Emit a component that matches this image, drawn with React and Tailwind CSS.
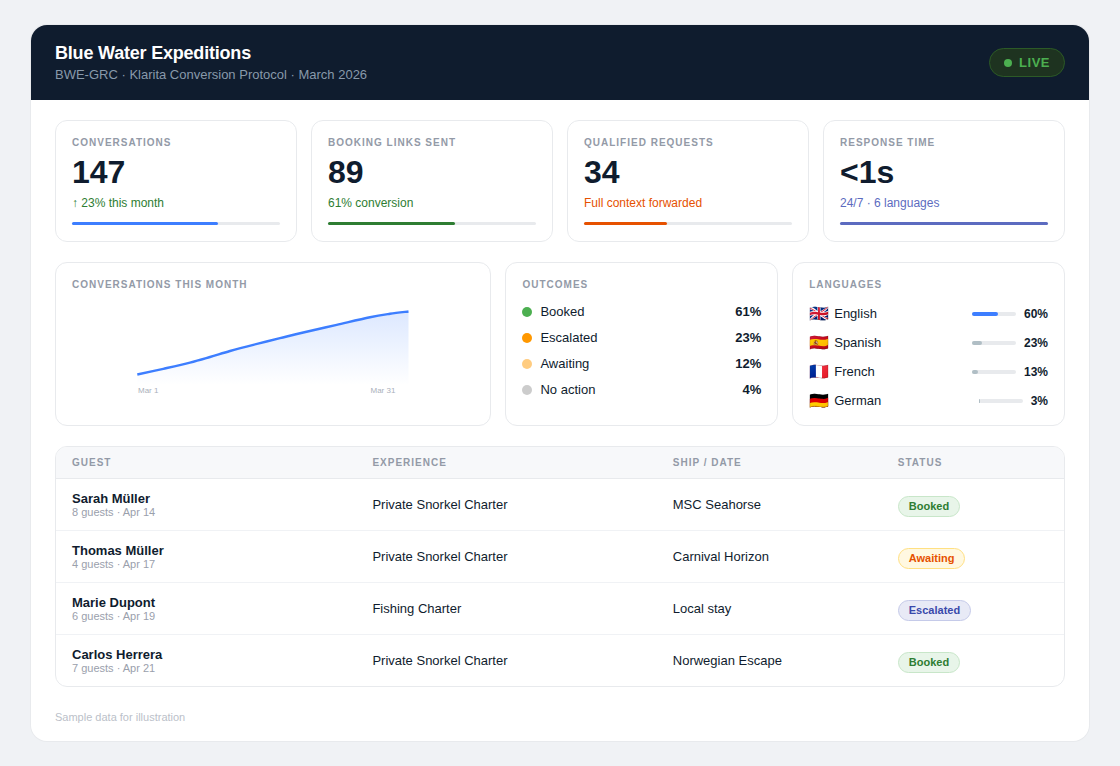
const stats = [
  { label: "CONVERSATIONS", value: "147", note: "↑ 23% this month", noteColor: "text-[#2e7d32]", bar: "bg-[#3d7eff]", pct: "w-[70%]" },
  { label: "BOOKING LINKS SENT", value: "89", note: "61% conversion", noteColor: "text-[#2e7d32]", bar: "bg-[#2e7d32]", pct: "w-[61%]" },
  { label: "QUALIFIED REQUESTS", value: "34", note: "Full context forwarded", noteColor: "text-[#e65100]", bar: "bg-[#e65100]", pct: "w-[40%]" },
  { label: "RESPONSE TIME", value: "<1s", note: "24/7 · 6 languages", noteColor: "text-[#5c6bc0]", bar: "bg-[#5c6bc0]", pct: "w-full" },
];

const outcomes = [
  { name: "Booked", pct: "61%", dot: "bg-[#4caf50]" },
  { name: "Escalated", pct: "23%", dot: "bg-[#ff9800]" },
  { name: "Awaiting", pct: "12%", dot: "bg-[#ffcc80]" },
  { name: "No action", pct: "4%", dot: "bg-[#cccccc]" },
];

const languages = [
  { flag: "🇬🇧", name: "English", pct: "60%", bar: "bg-[#3d7eff]", width: "w-[60%]" },
  { flag: "🇪🇸", name: "Spanish", pct: "23%", bar: "bg-[#b0bec5]", width: "w-[23%]" },
  { flag: "🇫🇷", name: "French", pct: "13%", bar: "bg-[#b0bec5]", width: "w-[13%]" },
  { flag: "🇩🇪", name: "German", pct: "3%", bar: "bg-[#b0bec5]", width: "w-[3%]" },
];

const guests = [
  { name: "Sarah Müller", sub: "8 guests · Apr 14", experience: "Private Snorkel Charter", ship: "MSC Seahorse", status: "Booked" },
  { name: "Thomas Müller", sub: "4 guests · Apr 17", experience: "Private Snorkel Charter", ship: "Carnival Horizon", status: "Awaiting" },
  { name: "Marie Dupont", sub: "6 guests · Apr 19", experience: "Fishing Charter", ship: "Local stay", status: "Escalated" },
  { name: "Carlos Herrera", sub: "7 guests · Apr 21", experience: "Private Snorkel Charter", ship: "Norwegian Escape", status: "Booked" },
];

const badgeStyles = {
  Booked: "bg-[#e8f5e9] border-[#c8e6c9] text-[#2e7d32]",
  Awaiting: "bg-[#fff8e1] border-[#ffe082] text-[#e65100]",
  Escalated: "bg-[#e8eaf6] border-[#c5cae9] text-[#3949ab]",
};

// read off the reference, smoothed below
const chartPoints = [
  [1.3, 64.5], [27.3, 58.8], [54, 52.6], [74, 47], [94, 41], [117.3, 34.8],
  [144, 28.2], [167.3, 22.5], [200.7, 14.8], [234, 7.2], [254, 3.8], [272.5, 1.5],
];

function smoothPath(points) {
  let d = `M${points[0][0]} ${points[0][1]}`;
  for (let i = 0; i < points.length - 1; i++) {
    const p0 = points[i - 1] || points[i];
    const p1 = points[i];
    const p2 = points[i + 1];
    const p3 = points[i + 2] || p2;
    const c1x = p1[0] + (p2[0] - p0[0]) / 6;
    const c1y = p1[1] + (p2[1] - p0[1]) / 6;
    const c2x = p2[0] - (p3[0] - p1[0]) / 6;
    const c2y = p2[1] - (p3[1] - p1[1]) / 6;
    d += ` C${c1x} ${c1y} ${c2x} ${c2y} ${p2[0]} ${p2[1]}`;
  }
  return d;
}

const linePath = smoothPath(chartPoints);

function CardLabel({ children }) {
  return <div className="text-[10px] leading-[12px] font-bold tracking-[1px] text-[#939aa7]">{children}</div>;
}

function StatCard({ label, value, note, noteColor, bar, pct }) {
  return (
    <div className="h-[122px] rounded-xl border border-[#e8eaed] bg-white px-4 pt-4">
      <CardLabel>{label}</CardLabel>
      <div className="mt-px text-[32px] leading-[44px] font-bold text-[#0f1c2e]">{value}</div>
      <div className={`mt-[2px] text-xs leading-[14px] ${noteColor}`}>{note}</div>
      <div className="mt-3 h-[3px] rounded-sm bg-[#e8eaed]">
        <div className={`h-full rounded-sm ${bar} ${pct}`} />
      </div>
    </div>
  );
}

function ChartCard() {
  return (
    <div className="rounded-xl border border-[#e8eaed] bg-white px-4 pt-4">
      <CardLabel>CONVERSATIONS THIS MONTH</CardLabel>
      <svg className="mx-auto mt-[19px] block" width="274" height="90" viewBox="0 0 274 90">
        <defs>
          <linearGradient id="chartFill" x1="0" y1="0" x2="0" y2="1">
            <stop offset="0%" stopColor="#3d7eff" stopOpacity="0.18" />
            <stop offset="100%" stopColor="#3d7eff" stopOpacity="0" />
          </linearGradient>
        </defs>
        <path d={`${linePath} L272.5 75 L1.3 75 Z`} fill="url(#chartFill)" />
        <path d={linePath} fill="none" stroke="#3d7eff" strokeWidth="2.4" />
        <text x="2" y="83" fontSize="8" fill="#aab0bb">Mar 1</text>
        <text x="234.5" y="83" fontSize="8" fill="#aab0bb">Mar 31</text>
      </svg>
    </div>
  );
}

function OutcomesCard() {
  return (
    <div className="rounded-xl border border-[#e8eaed] bg-white px-4 pt-4">
      <CardLabel>OUTCOMES</CardLabel>
      <div className="mt-[8px]">
        {outcomes.map((o) => (
          <div key={o.name} className="flex h-[26px] items-center text-[13px] text-[#0f1c2e]">
            <span className={`h-[10px] w-[10px] rounded-full ${o.dot}`} />
            <span className="ml-2">{o.name}</span>
            <span className="ml-auto font-bold">{o.pct}</span>
          </div>
        ))}
      </div>
    </div>
  );
}

function LanguagesCard() {
  return (
    <div className="rounded-xl border border-[#e8eaed] bg-white px-4 pt-4">
      <CardLabel>LANGUAGES</CardLabel>
      <div className="mt-[8px]">
        {languages.map((l) => (
          <div key={l.name} className="flex h-[29px] items-center text-[13px] text-[#0f1c2e]">
            <span className="w-[25px] text-base leading-none">{l.flag}</span>
            <span>{l.name}</span>
            <div className="ml-auto h-1 w-11 rounded-sm bg-[#e8eaed]">
              <div className={`h-full rounded-sm ${l.bar} ${l.width}`} />
            </div>
            <span className="ml-2 text-xs font-bold">{l.pct}</span>
          </div>
        ))}
      </div>
    </div>
  );
}

function GuestTable() {
  const thClass = "border-b border-[#e8eaed] px-4 text-left text-[10px] font-bold tracking-[1px] text-[#939aa7]";
  const tdClass = "border-b border-[#f0f2f5] px-4 group-last:border-b-0";
  return (
    <div className="mt-5 overflow-hidden rounded-xl border border-[#e8eaed]">
      <table className="w-full table-fixed border-separate border-spacing-0">
        <thead>
          <tr className="h-[32px] bg-[#f7f8fa]">
            <th className={`${thClass} w-[300.4px]`}>GUEST</th>
            <th className={`${thClass} w-[300.4px]`}>EXPERIENCE</th>
            <th className={`${thClass} w-[225px]`}>SHIP / DATE</th>
            <th className={thClass}>STATUS</th>
          </tr>
        </thead>
        <tbody>
          {guests.map((g) => (
            <tr key={g.name} className="group h-[52px] text-[13px] text-[#0f1c2e] last:h-[51px]">
              <td className={tdClass}>
                <div className="leading-[15px] font-bold">{g.name}</div>
                <div className="text-[11px] leading-[13px] text-[#9aa0ac]">{g.sub}</div>
              </td>
              <td className={tdClass}>{g.experience}</td>
              <td className={tdClass}>{g.ship}</td>
              <td className={`${tdClass} pt-1`}>
                <span className={`inline-block rounded-full border px-[10px] py-[2px] text-[11px] leading-[15px] font-bold ${badgeStyles[g.status]}`}>
                  {g.status}
                </span>
              </td>
            </tr>
          ))}
        </tbody>
      </table>
    </div>
  );
}

export default function App() {
  return (
    <div className="h-[766px] bg-[#f0f2f5] px-[31px] pt-[25px] font-['Liberation_Sans',sans-serif]">
      <div className="h-[716px] overflow-hidden rounded-2xl bg-white shadow-[0_0_0_1px_#e8eaed]">
        <div className="flex h-[75px] items-center justify-between bg-[#0f1c2e] px-6">
          <div>
            <h1 className="text-lg leading-[22px] font-bold tracking-[-0.2px] text-white">Blue Water Expeditions</h1>
            <p className="mt-[3px] text-[13px] leading-[16px] text-[#8899aa]">
              BWE-GRC · Klarita Conversion Protocol · March 2026
            </p>
          </div>
          <div className="flex h-[29px] items-center gap-[7px] rounded-full border border-[#2c5a27] bg-[#1e3320] px-[14px] text-[13px] font-bold tracking-[0.5px] text-[#4caf50]">
            <span className="h-2 w-2 rounded-full bg-[#4caf50]" />
            LIVE
          </div>
        </div>

        <div className="px-6 pt-5">
          <div className="grid grid-cols-4 gap-[14px]">
            {stats.map((s) => (
              <StatCard key={s.label} {...s} />
            ))}
          </div>

          <div className="mt-5 grid h-[164px] grid-cols-[1.6fr_1fr_1fr] gap-[14px]">
            <ChartCard />
            <OutcomesCard />
            <LanguagesCard />
          </div>

          <GuestTable />

          <p className="mt-6 text-[11px] leading-[13px] text-[#bbbfc9]">Sample data for illustration</p>
        </div>
      </div>
    </div>
  );
}
